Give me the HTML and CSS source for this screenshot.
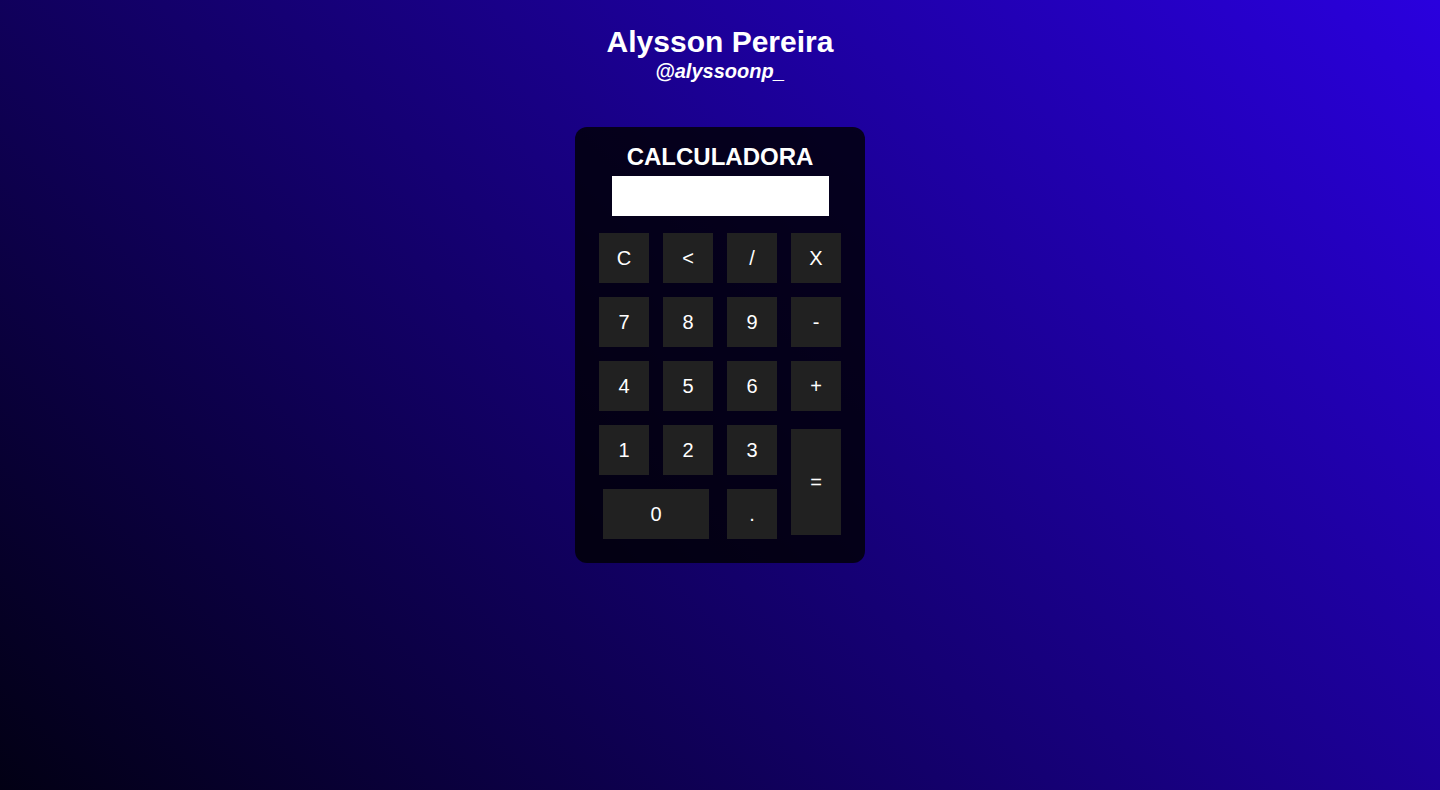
FILE: index.html
```html
<!DOCTYPE html>
<html lang="pt">
<head>
<meta charset="utf-8">
<title>Calculadora</title>
<link rel="stylesheet" href="styles.css">
</head>
<body>
  <header class="author">
    <h1 class="author-name">Alysson Pereira</h1>
    <p class="author-handle">@alyssoonp_</p>
  </header>
  <main class="calc">
    <h2 class="calc-title">CALCULADORA</h2>
    <input class="calc-display" type="text" readonly>
    <div class="keys">
      <button class="key">C</button>
      <button class="key">&lt;</button>
      <button class="key">/</button>
      <button class="key">X</button>
      <button class="key">7</button>
      <button class="key">8</button>
      <button class="key">9</button>
      <button class="key">-</button>
      <button class="key">4</button>
      <button class="key">5</button>
      <button class="key">6</button>
      <button class="key">+</button>
      <button class="key">1</button>
      <button class="key">2</button>
      <button class="key">3</button>
      <button class="key key-equals">=</button>
      <button class="key key-zero">0</button>
      <button class="key">.</button>
    </div>
  </main>
</body>
</html>
```
FILE: styles.css
```css
* { box-sizing: border-box; }
html, body { height: 100%; }
body {
  margin: 0;
  min-height: 790px;
  font-family: "Liberation Sans", Arial, sans-serif;
  color: #fff;
  background: linear-gradient(45deg, #020014 0%, #2a00de 100%);
  display: flex;
  flex-direction: column;
  align-items: center;
  padding-top: 23px;
}
.author { text-align: center; }
.author-name {
  margin: 0;
  font-size: 30px;
  line-height: 37px;
  font-weight: bold;
}
.author-handle {
  margin: 0;
  font-size: 20px;
  line-height: 23px;
  font-weight: bold;
  font-style: italic;
}
.calc {
  margin-top: 44px;
  width: 290px;
  padding: 16px 24px 24px;
  background: rgba(0, 0, 0, 0.8);
  border-radius: 12px;
  display: flex;
  flex-direction: column;
  align-items: center;
}
.calc-title {
  margin: 0;
  font-size: 24px;
  line-height: 28px;
  font-weight: bold;
}
.calc-display {
  margin-top: 5px;
  width: 217px;
  height: 40px;
  border: none;
  padding: 0 8px;
  background: #fff;
  font-family: inherit;
  font-size: 20px;
  outline: none;
}
.keys {
  margin-top: 17px;
  display: grid;
  grid-template-columns: repeat(4, 50px);
  grid-auto-rows: 50px;
  gap: 14px;
}
.key {
  width: 50px;
  height: 50px;
  border: none;
  padding: 0;
  background: #212121;
  color: #fff;
  font-family: "Liberation Sans", Arial, sans-serif;
  font-size: 20px;
  cursor: pointer;
}
.key-equals {
  grid-column: 4;
  grid-row: 4 / span 2;
  height: 106px;
  align-self: center;
}
.key-zero {
  grid-column: 1 / span 2;
  grid-row: 5;
  width: 106px;
  justify-self: center;
}
```
